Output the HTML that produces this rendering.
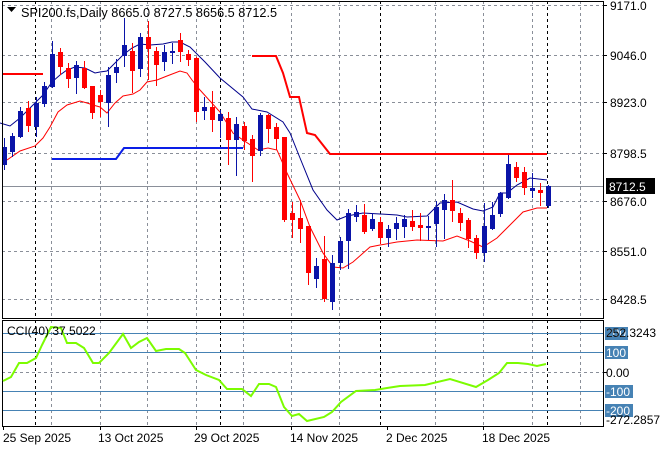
<!DOCTYPE html>
<html><head><meta charset="utf-8"><style>
html,body{margin:0;padding:0;background:#fff;width:660px;height:450px;overflow:hidden}
svg{display:block;font-family:"Liberation Sans",sans-serif}
</style></head><body>
<svg width="660" height="450" xmlns="http://www.w3.org/2000/svg">
<rect width="660" height="450" fill="#fff"/>
<g stroke="#8a8f99" stroke-width="1" stroke-dasharray="3,3" fill="none">
<path d="M2 5.5H603M2 55.5H603M2 102.5H603M2 153.5H603M2 201.5H603M2 251.5H603M2 299.5H603"/>
<path d="M51.5 1V318M100.5 1V318M147.5 1V318M196.5 1V318M243.5 1V318M291.5 1V318M339.5 1V318M435.5 1V318M483.5 1V318M532.5 1V318M580.5 1V318"/>
<path d="M51.5 320V426M100.5 320V426M147.5 320V426M196.5 320V426M243.5 320V426M291.5 320V426M339.5 320V426M435.5 320V426M483.5 320V426M532.5 320V426M580.5 320V426"/>
<path d="M2 372.5H603"/>
</g>
<g stroke="#000" stroke-width="1" stroke-dasharray="3,3" fill="none">
<path d="M35.5 1V318M220.5 1V318M380.5 1V318M547.5 1V318M35.5 320V426M220.5 320V426M380.5 320V426M547.5 320V426"/>
</g>
<line x1="2" y1="186.5" x2="603" y2="186.5" stroke="#8a8f99"/>
<polyline points="3,74 43,74" stroke="#f00" stroke-width="2" fill="none"/>
<polyline points="252,56 276,56 283,73 290,97 299,97 307,133 315,135 330,154 547,154" stroke="#f00" stroke-width="2" fill="none"/>
<polyline points="52,159 116,159 124,148 243,148" stroke="#0a1ee6" stroke-width="2" fill="none"/>
<polyline points="0,123 10,126 20,118 35,103 43,95 52,82 60,75 67,70 75,67 85,68 95,73 100,72 107,71 115,63 123,55 132,48 140,44 150,45 163,44 172,42 180,42 190,47 205,62 220,78 243,97 252,109 267,112 283,122 290,133 300,158 313,190 327,210 337,220 347,216 363,213 380,214 397,215 407,217 427,216 440,203 457,202 473,209 483,211 493,207 500,193 507,193 517,185 530,178 547,180" stroke="#00008b" stroke-width="1" fill="none"/>
<polyline points="7,160 20,151 35,146 43,138 50,127 58,112 67,105 80,101 87,103 93,105 100,107 107,113 115,103 123,96 133,94 140,90 147,82 157,80 167,76 180,71 187,73 192,80 200,90 220,112 233,133 243,140 258,150 268,148 277,150 287,173 300,200 310,227 323,253 333,267 343,268 353,262 370,247 380,245 397,242 417,240 443,241 457,236 470,241 483,247 497,238 510,225 523,212 537,208 547,208" stroke="#f00" stroke-width="1" fill="none"/>
<g fill="#0a14a8">
<rect x="4" y="138" width="1" height="32"/><rect x="2" y="147" width="5" height="18"/>
<rect x="12" y="133" width="1" height="24"/><rect x="10" y="136" width="5" height="16"/>
<rect x="20" y="107" width="1" height="31"/><rect x="18" y="111" width="5" height="26"/>
<rect x="36" y="97" width="1" height="40"/><rect x="34" y="103" width="5" height="24"/>
<rect x="44" y="82" width="1" height="25"/><rect x="42" y="86" width="5" height="18"/>
<rect x="52" y="41" width="1" height="47"/><rect x="50" y="54" width="5" height="33"/>
<rect x="76" y="61" width="1" height="33"/><rect x="74" y="65" width="5" height="13"/>
<rect x="108" y="67" width="1" height="60"/><rect x="106" y="75" width="5" height="28"/>
<rect x="116" y="59" width="1" height="24"/><rect x="114" y="67" width="5" height="6"/>
<rect x="124" y="18" width="1" height="49"/><rect x="122" y="45" width="5" height="11"/>
<rect x="140" y="33" width="1" height="44"/><rect x="138" y="37" width="5" height="32"/>
<rect x="164" y="45" width="1" height="26"/><rect x="162" y="52" width="5" height="10"/>
<rect x="172" y="43" width="1" height="21"/><rect x="170" y="51" width="5" height="2"/>
<rect x="204" y="97" width="1" height="23"/><rect x="202" y="107" width="5" height="4"/>
<rect x="220" y="110" width="1" height="28"/><rect x="218" y="114" width="5" height="7"/>
<rect x="236" y="117" width="1" height="59"/><rect x="234" y="124" width="5" height="16"/>
<rect x="260" y="113" width="1" height="43"/><rect x="258" y="115" width="5" height="36"/>
<rect x="316" y="258" width="1" height="30"/><rect x="314" y="266" width="5" height="13"/>
<rect x="332" y="255" width="1" height="55"/><rect x="330" y="263" width="5" height="39"/>
<rect x="340" y="237" width="1" height="33"/><rect x="338" y="241" width="5" height="22"/>
<rect x="348" y="209" width="1" height="60"/><rect x="346" y="213" width="5" height="28"/>
<rect x="356" y="205" width="1" height="17"/><rect x="354" y="212" width="5" height="5"/>
<rect x="372" y="213" width="1" height="18"/><rect x="370" y="219" width="5" height="10"/>
<rect x="388" y="225" width="1" height="22"/><rect x="386" y="229" width="5" height="9"/>
<rect x="396" y="217" width="1" height="23"/><rect x="394" y="223" width="5" height="6"/>
<rect x="404" y="215" width="1" height="23"/><rect x="402" y="219" width="5" height="8"/>
<rect x="428" y="216" width="1" height="24"/><rect x="426" y="226" width="5" height="2"/>
<rect x="436" y="201" width="1" height="46"/><rect x="434" y="207" width="5" height="17"/>
<rect x="444" y="194" width="1" height="45"/><rect x="442" y="200" width="5" height="10"/>
<rect x="484" y="203" width="1" height="59"/><rect x="482" y="226" width="5" height="27"/>
<rect x="492" y="202" width="1" height="28"/><rect x="490" y="215" width="5" height="14"/>
<rect x="500" y="192" width="1" height="25"/><rect x="498" y="193" width="5" height="21"/>
<rect x="508" y="155" width="1" height="44"/><rect x="506" y="164" width="5" height="34"/>
<rect x="532" y="173" width="1" height="25"/><rect x="530" y="188" width="5" height="3"/>
<rect x="548" y="185" width="1" height="23"/><rect x="546" y="186" width="5" height="20"/>
</g>
<g fill="#f00">
<rect x="28" y="101" width="1" height="31"/><rect x="26" y="108" width="5" height="18"/>
<rect x="60" y="48" width="1" height="27"/><rect x="58" y="52" width="5" height="15"/>
<rect x="68" y="63" width="1" height="25"/><rect x="66" y="68" width="5" height="11"/>
<rect x="84" y="61" width="1" height="28"/><rect x="82" y="68" width="5" height="20"/>
<rect x="92" y="86" width="1" height="33"/><rect x="90" y="86" width="5" height="27"/>
<rect x="100" y="90" width="1" height="27"/><rect x="98" y="95" width="5" height="7"/>
<rect x="132" y="43" width="1" height="50"/><rect x="130" y="51" width="5" height="20"/>
<rect x="148" y="21" width="1" height="59"/><rect x="146" y="37" width="5" height="12"/>
<rect x="156" y="47" width="1" height="39"/><rect x="154" y="51" width="5" height="14"/>
<rect x="180" y="33" width="1" height="29"/><rect x="178" y="40" width="5" height="12"/>
<rect x="188" y="50" width="1" height="16"/><rect x="186" y="54" width="5" height="6"/>
<rect x="196" y="57" width="1" height="65"/><rect x="194" y="58" width="5" height="54"/>
<rect x="212" y="91" width="1" height="41"/><rect x="210" y="107" width="5" height="13"/>
<rect x="228" y="112" width="1" height="53"/><rect x="226" y="118" width="5" height="22"/>
<rect x="244" y="122" width="1" height="28"/><rect x="242" y="126" width="5" height="15"/>
<rect x="252" y="135" width="1" height="47"/><rect x="250" y="139" width="5" height="17"/>
<rect x="268" y="114" width="1" height="29"/><rect x="266" y="115" width="5" height="14"/>
<rect x="276" y="123" width="1" height="27"/><rect x="274" y="127" width="5" height="12"/>
<rect x="284" y="137" width="1" height="85"/><rect x="282" y="137" width="5" height="83"/>
<rect x="292" y="202" width="1" height="36"/><rect x="290" y="213" width="5" height="7"/>
<rect x="300" y="200" width="1" height="43"/><rect x="298" y="218" width="5" height="11"/>
<rect x="308" y="226" width="1" height="59"/><rect x="306" y="226" width="5" height="47"/>
<rect x="324" y="236" width="1" height="66"/><rect x="322" y="259" width="5" height="40"/>
<rect x="364" y="204" width="1" height="30"/><rect x="362" y="215" width="5" height="17"/>
<rect x="380" y="217" width="1" height="27"/><rect x="378" y="222" width="5" height="16"/>
<rect x="412" y="210" width="1" height="21"/><rect x="410" y="221" width="5" height="6"/>
<rect x="420" y="213" width="1" height="28"/><rect x="418" y="225" width="5" height="3"/>
<rect x="452" y="180" width="1" height="42"/><rect x="450" y="200" width="5" height="11"/>
<rect x="460" y="208" width="1" height="23"/><rect x="458" y="213" width="5" height="10"/>
<rect x="468" y="218" width="1" height="30"/><rect x="466" y="220" width="5" height="19"/>
<rect x="476" y="235" width="1" height="24"/><rect x="474" y="238" width="5" height="15"/>
<rect x="516" y="162" width="1" height="20"/><rect x="514" y="167" width="5" height="11"/>
<rect x="524" y="167" width="1" height="28"/><rect x="522" y="172" width="5" height="16"/>
<rect x="540" y="183" width="1" height="23"/><rect x="538" y="190" width="5" height="3"/>
</g>
<rect x="2.5" y="1.5" width="601" height="317" fill="none" stroke="#000"/>
<rect x="2.5" y="320.5" width="601" height="106" fill="none" stroke="#000"/>
<path d="M7 7h9l-4.5 5z" fill="#000"/>
<text x="21" y="17" font-size="12.7" fill="#000">SPI200.fs,Daily  8665.0 8727.5 8656.5 8712.5</text>
<g font-size="12" fill="#000">
<text x="610" y="10">9171.0</text>
<text x="610" y="60">9046.0</text>
<text x="610" y="107">8923.0</text>
<text x="610" y="158">8798.5</text>
<text x="610" y="206">8676.0</text>
<text x="610" y="256">8551.0</text>
<text x="610" y="304">8428.5</text>
</g>
<g stroke="#000"><path d="M603 5.5h4M603 55.5h4M603 102.5h4M603 153.5h4M603 201.5h4M603 251.5h4M603 299.5h4M603 372.5h4"/></g>
<rect x="606" y="178" width="49" height="16" fill="#000"/>
<text x="609" y="191" font-size="12" fill="#fff">8712.5</text>
<g stroke="#4682b4" stroke-width="1"><path d="M3 333.5H603M3 352.5H603M3 391.5H603M3 410.5H603"/></g>
<polyline points="3,381 11,377 19,363 27,363 36,358 42,345 51,327 61,328 67,343 76,343 84,348 93,363 99,363 109,353 123,334 131,348 139,342 147,338 156,351 166,349 179,349 185,353 196,370 206,375 219,380 227,389 242,389 251,396 259,384 269,384 276,387 284,407 292,416 299,414 307,421 324,417 332,412 341,402 356,391 375,390 387,388 400,386 425,385 450,379 476,387 488,380 499,373 507,363 518,363 528,364 537,366 546,364" stroke="#7cfc00" stroke-width="2" fill="none"/>
<text x="7" y="335" font-size="12" fill="#000">CCI(40) 37.5022</text>
<g fill="#4682b4">
<rect x="605" y="327" width="23" height="13"/>
<rect x="605" y="346" width="23" height="13"/>
<rect x="605" y="385" width="28" height="13"/>
<rect x="605" y="404" width="28" height="13"/>
</g>
<g font-size="12">
<text x="606" y="337" fill="#fff">200</text>
<text x="606" y="337" fill="#000">252.3243</text>
<text x="606" y="357" fill="#fff">100</text>
<text x="606" y="377" fill="#000">0.00</text>
<text x="606" y="396" fill="#fff">-100</text>
<text x="606" y="415" fill="#fff">-200</text>
<text x="606" y="424" fill="#000">-272.2857</text>
</g>
<g font-size="12" fill="#000">
<text x="3" y="442">25 Sep 2025</text>
<text x="98" y="442">13 Oct 2025</text>
<text x="194" y="442">29 Oct 2025</text>
<text x="290" y="442">14 Nov 2025</text>
<text x="386" y="442">2 Dec 2025</text>
<text x="482" y="442">18 Dec 2025</text>
</g>
<g stroke="#000"><path d="M3.5 426v4M100.5 426v4M196.5 426v4M291.5 426v4M387.5 426v4M483.5 426v4"/></g>
</svg>
</body></html>
